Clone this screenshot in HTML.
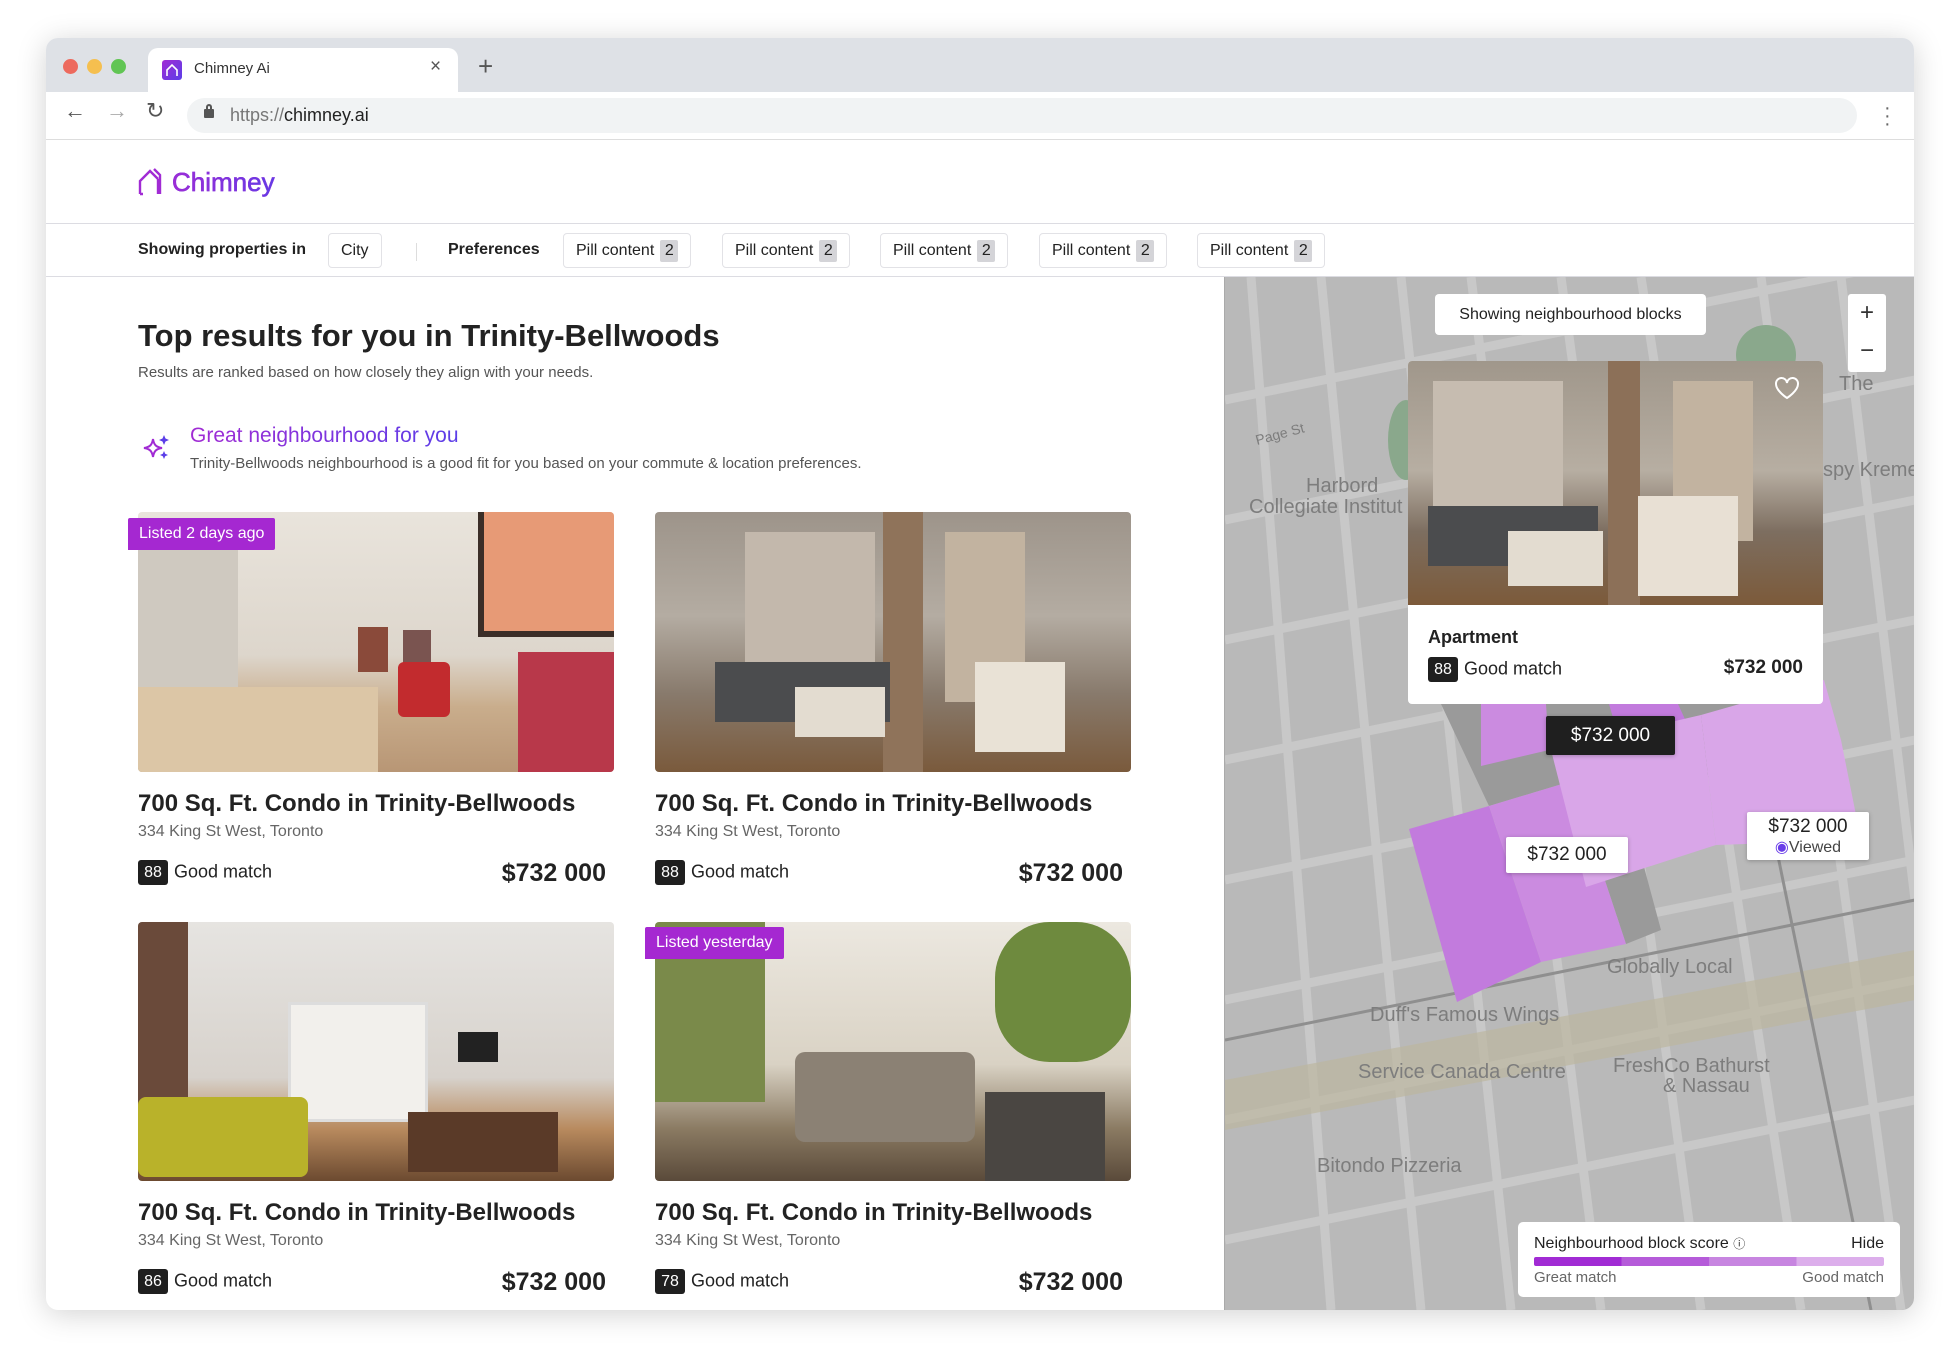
<!DOCTYPE html>
<html><head><meta charset="utf-8"><style>
*{box-sizing:border-box;margin:0;padding:0}
body{width:1960px;height:1364px;background:#fff;font-family:"Liberation Sans",sans-serif;position:relative;overflow:hidden;color:#1f1f1f}
.abs{position:absolute}
.win{position:absolute;left:46px;top:38px;width:1868px;height:1272px;border-radius:12px;overflow:hidden;box-shadow:0 4px 30px rgba(0,0,0,.18);background:#fff}
.pill{position:absolute;top:233px;height:35px;border:1px solid #e2e2e6;border-radius:4px;font-size:16px;line-height:33px;padding:0 12px;color:#222;background:#fff}
.pill b{display:inline-block;background:#d4d4d8;font-weight:normal;width:18px;height:22px;line-height:22px;text-align:center;margin-left:6px;border-radius:2px}
.img{position:absolute;border-radius:4px;overflow:hidden}
.title{position:absolute;font-size:24px;font-weight:bold;color:#222}
.addr{position:absolute;font-size:16px;color:#666}
.badge{position:absolute;font-size:18px;color:#222}
.badge span{display:inline-block;background:#1f1f1f;color:#fff;font-size:16px;width:30px;height:25px;line-height:25px;text-align:center;border-radius:3px;margin-right:6px;vertical-align:middle}
.price{position:absolute;font-size:25px;font-weight:bold;color:#222;text-align:right}
.tag{position:absolute;background:#a528d1;color:#fff;font-size:16px;height:32px;line-height:32px;padding:0 11px;border-radius:2px 2px 2px 0}
.mk{position:absolute;background:#fff;font-size:19px;text-align:center;border-radius:2px;box-shadow:0 1px 4px rgba(0,0,0,.25);color:#222}
</style></head><body>
<div class="win">
 <div class="abs" style="left:0;top:0;width:1868px;height:54px;background:#dee1e6"></div>
 <div class="abs" style="left:17px;top:21px;width:15px;height:15px;border-radius:50%;background:#ed6a5e"></div>
 <div class="abs" style="left:41px;top:21px;width:15px;height:15px;border-radius:50%;background:#f5bf4f"></div>
 <div class="abs" style="left:65px;top:21px;width:15px;height:15px;border-radius:50%;background:#61c554"></div>
 <div class="abs" style="left:102px;top:10px;width:310px;height:44px;background:#fff;border-radius:10px 10px 0 0"></div>
 <div class="abs" style="left:116px;top:22px;width:20px;height:20px;border-radius:3px;background:linear-gradient(135deg,#a12bd4,#5b3ee8)"></div>
 <svg class="abs" style="left:118px;top:24px" width="16" height="16" viewBox="0 0 16 16"><path d="M3 14V8l5-5 5 5v6" fill="none" stroke="#fff" stroke-width="1.6"/></svg>
 <div class="abs" style="left:148px;top:22px;font-size:15px;color:#333">Chimney Ai</div>
 <div class="abs" style="left:384px;top:18px;font-size:19px;color:#555">×</div>
 <div class="abs" style="left:432px;top:13px;font-size:26px;color:#555">+</div>
 <div class="abs" style="left:0;top:54px;width:1868px;height:48px;background:#fff;border-bottom:1px solid #ddd"></div>
 <div class="abs" style="left:18px;top:60px;font-size:22px;color:#555">←</div>
 <div class="abs" style="left:60px;top:60px;font-size:22px;color:#aaa">→</div>
 <div class="abs" style="left:100px;top:60px;font-size:22px;color:#555">↻</div>
 <div class="abs" style="left:141px;top:60px;width:1670px;height:35px;border-radius:18px;background:#f1f3f4"></div>
 <div class="abs" style="left:158px;top:71px;width:10px;height:9px;background:#555;border-radius:1px"></div>
 <div class="abs" style="left:160px;top:66px;width:6px;height:7px;border:2px solid #555;border-bottom:none;border-radius:3px 3px 0 0"></div>
 <div class="abs" style="left:184px;top:67px;font-size:18px;color:#777">https://<span style="color:#222">chimney.ai</span></div>
 <div class="abs" style="left:1838px;top:66px;font-size:20px;color:#666;line-height:8px">·<br>·<br>·</div>
 <svg class="abs" style="left:92px;top:128px" width="28" height="30" viewBox="0 0 28 30"><path d="M2 28V15L12 5l8 8M20 28V13M2 28h3M16 3l6 6v19" fill="none" stroke="#a12bd4" stroke-width="2.4"/></svg>
 <div class="abs" style="left:126px;top:129px;font-size:26px;background:linear-gradient(90deg,#a12bd4,#5b3ee8);-webkit-background-clip:text;color:transparent;-webkit-text-stroke:0.5px #8a33dc">Chimney</div>
 <div class="abs" style="left:0;top:185px;width:1868px;height:1px;background:#dcdce2"></div>
 <div class="abs" style="left:92px;top:203px;font-size:16px;font-weight:bold;color:#222">Showing properties in</div>
 <div class="pill" style="left:282px;top:195px">City</div>
 <div class="abs" style="left:370px;top:205px;width:1px;height:18px;background:#ddd"></div>
 <div class="abs" style="left:402px;top:203px;font-size:16px;font-weight:bold;color:#222">Preferences</div>
 <div class="pill" style="left:517px;top:195px">Pill content<b>2</b></div>
 <div class="pill" style="left:676px;top:195px">Pill content<b>2</b></div>
 <div class="pill" style="left:834px;top:195px">Pill content<b>2</b></div>
 <div class="pill" style="left:993px;top:195px">Pill content<b>2</b></div>
 <div class="pill" style="left:1151px;top:195px">Pill content<b>2</b></div>
 <div class="abs" style="left:0;top:238px;width:1868px;height:1px;background:#dcdce2"></div>
</div>

<div class="abs" style="left:138px;top:318px;font-size:31px;font-weight:bold;color:#222">Top results for you in Trinity-Bellwoods</div>
<div class="abs" style="left:138px;top:364px;font-size:15px;color:#555">Results are ranked based on how closely they align with your needs.</div>
<svg class="abs" style="left:142px;top:433px" width="30" height="30" viewBox="0 0 30 30"><path d="M11 6C12 12 14 14 20 15 14 16 12 18 11 24 10 18 8 16 2 15 8 14 10 12 11 6Z" fill="none" stroke="#a12bd4" stroke-width="2"/><path d="M22 2l1.5 3.5L27 7l-3.5 1.5L22 12l-1.5-3.5L17 7l3.5-1.5Z" fill="#5b3ee8"/><path d="M22 18l1.2 2.8L26 22l-2.8 1.2L22 26l-1.2-2.8L18 22l2.8-1.2Z" fill="#5b3ee8"/></svg>
<div class="abs" style="left:190px;top:424px;font-size:21px;background:linear-gradient(90deg,#a12bd4,#5b3ee8);-webkit-background-clip:text;color:transparent">Great neighbourhood for you</div>
<div class="abs" style="left:190px;top:455px;font-size:15px;color:#555">Trinity-Bellwoods neighbourhood is a good fit for you based on your commute &amp; location preferences.</div>

<div class="img" style="left:138px;top:512px;width:476px;height:260px;background:linear-gradient(180deg,#e9e4dc 0%,#ddd6cc 55%,#c9ad8c 75%,#b89675 100%)">
 <div class="abs" style="left:0;top:30px;width:100px;height:200px;background:#cfc9c0"></div>
 <div class="abs" style="left:340px;top:0;width:140px;height:125px;background:#e79a76;border-left:6px solid #3b2e28;border-bottom:6px solid #3b2e28"></div>
 <div class="abs" style="left:220px;top:115px;width:30px;height:45px;background:#8a4a3a"></div>
 <div class="abs" style="left:265px;top:118px;width:28px;height:45px;background:#7a5450"></div>
 <div class="abs" style="left:260px;top:150px;width:52px;height:55px;background:#c22b2e;border-radius:6px"></div>
 <div class="abs" style="left:380px;top:140px;width:100px;height:120px;background:#b8384a"></div>
 <div class="abs" style="left:0;top:175px;width:240px;height:85px;background:#dcc6a6"></div>
</div>
<div class="img" style="left:655px;top:512px;width:476px;height:260px;background:linear-gradient(180deg,#9d948a 0%,#b4aca2 40%,#887a6c 70%,#7a5a3c 100%)">
 <div class="abs" style="left:90px;top:20px;width:130px;height:150px;background:#c3b8ac"></div>
 <div class="abs" style="left:290px;top:20px;width:80px;height:170px;background:#c2b3a0"></div>
 <div class="abs" style="left:228px;top:0;width:40px;height:260px;background:#8f735a"></div>
 <div class="abs" style="left:60px;top:150px;width:175px;height:60px;background:#4b4c4e"></div>
 <div class="abs" style="left:140px;top:175px;width:90px;height:50px;background:#e3dcd0"></div>
 <div class="abs" style="left:320px;top:150px;width:90px;height:90px;background:#e9e2d6"></div>
</div>
<div class="img" style="left:138px;top:922px;width:476px;height:259px;background:linear-gradient(180deg,#e6e4e1 0%,#d7d2cc 60%,#b88a5e 80%,#6c4a30 100%)">
 <div class="abs" style="left:0;top:0;width:50px;height:200px;background:#6a4a3a"></div>
 <div class="abs" style="left:150px;top:80px;width:140px;height:120px;background:#f2f0ec;border:3px solid #ddd"></div>
 <div class="abs" style="left:0;top:175px;width:170px;height:80px;background:#b9b22a;border-radius:8px"></div>
 <div class="abs" style="left:320px;top:110px;width:40px;height:30px;background:#222"></div>
 <div class="abs" style="left:270px;top:190px;width:150px;height:60px;background:#5a3a28"></div>
</div>
<div class="img" style="left:655px;top:922px;width:476px;height:259px;background:linear-gradient(180deg,#ece8e0 0%,#d9d2c4 55%,#8a7a62 80%,#5a4a3a 100%)">
 <div class="abs" style="left:0;top:0;width:110px;height:180px;background:#7a8a4a"></div>
 <div class="abs" style="left:140px;top:130px;width:180px;height:90px;background:#8b8174;border-radius:10px"></div>
 <div class="abs" style="left:340px;top:0;width:136px;height:140px;background:#6e8a3e;border-radius:40%"></div>
 <div class="abs" style="left:330px;top:170px;width:120px;height:89px;background:#4a4642"></div>
</div>
<div class="tag" style="left:128px;top:518px">Listed 2 days ago</div>
<div class="tag" style="left:645px;top:927px">Listed yesterday</div>

<div class="title" style="left:138px;top:790px">700 Sq. Ft. Condo in Trinity-Bellwoods</div>
<div class="addr" style="left:138px;top:823px">334 King St West, Toronto</div>
<div class="badge" style="left:138px;top:860px"><span>88</span>Good match</div>
<div class="price" style="left:420px;top:859px;width:186px">$732 000</div>

<div class="title" style="left:655px;top:790px">700 Sq. Ft. Condo in Trinity-Bellwoods</div>
<div class="addr" style="left:655px;top:823px">334 King St West, Toronto</div>
<div class="badge" style="left:655px;top:860px"><span>88</span>Good match</div>
<div class="price" style="left:937px;top:859px;width:186px">$732 000</div>

<div class="title" style="left:138px;top:1199px">700 Sq. Ft. Condo in Trinity-Bellwoods</div>
<div class="addr" style="left:138px;top:1232px">334 King St West, Toronto</div>
<div class="badge" style="left:138px;top:1269px"><span>86</span>Good match</div>
<div class="price" style="left:420px;top:1268px;width:186px">$732 000</div>

<div class="title" style="left:655px;top:1199px">700 Sq. Ft. Condo in Trinity-Bellwoods</div>
<div class="addr" style="left:655px;top:1232px">334 King St West, Toronto</div>
<div class="badge" style="left:655px;top:1269px"><span>78</span>Good match</div>
<div class="price" style="left:937px;top:1268px;width:186px">$732 000</div>

<div class="abs" style="left:1224px;top:277px;width:690px;height:1033px;background:#b9b9b9;overflow:hidden;border-left:1px solid #aaa;border-bottom-right-radius:12px">
<svg width="690" height="1033" viewBox="1224 277 690 1033">
 <g stroke="#c8c8c8" stroke-width="9" fill="none">
  <path d="M1250 277L1330 1310M1320 277L1420 1310M1400 277L1510 1310M1470 277L1600 1310M1560 277L1700 1310M1640 277L1800 1310M1760 277L1900 1310M1840 277L1914 900"/>
  <path d="M1224 400L1914 260M1224 520L1914 380M1224 640L1914 500M1224 760L1914 620M1224 880L1914 740M1224 1000L1914 860M1224 1120L1914 980M1224 1240L1914 1100"/>
 </g>
 <g fill="#bcb79f" opacity=".7"><path d="M1224 1080L1914 950L1914 1000L1224 1130Z"/></g>
 <path d="M1224 1040L1914 900" stroke="#8f8f8f" stroke-width="3"/>
 <path d="M1745 700L1870 1310" stroke="#8f8f8f" stroke-width="3"/>
 <ellipse cx="1765" cy="355" rx="30" ry="30" fill="#8aa88c"/>
 <ellipse cx="1405" cy="440" rx="18" ry="40" fill="#8aa88c"/>
 <path d="M1440 704L1748 704L1768 760L1625 800L1660 930L1625 944L1571 781L1488 806Z" fill="#9a9a9a"/>
 <path d="M1408 829L1488 806L1540 962L1456 1002Z" fill="#c27bdd"/>
 <path d="M1488 806L1571 781L1625 944L1540 962Z" fill="#cb8be0"/>
 <path d="M1480 704L1545 704L1548 750L1480 766Z" fill="#cb8be0"/>
 <path d="M1608 704L1677 704L1688 728L1620 745Z" fill="#c27bdd"/>
 <path d="M1550 750L1700 715L1715 845L1585 887Z" fill="#d9a6e8"/>
 <path d="M1823 680L1840 740L1860 840L1715 845L1700 715Z" fill="#d9a6e8"/>
 <g font-family="Liberation Sans" fill="#7d7d7d" font-size="19">
  <text x="1305" y="492" font-size="20">Harbord</text>
  <text x="1248" y="513" font-size="20">Collegiate Institut</text>
  <text x="1822" y="476" font-size="20">spy Kreme</text>
  <text x="1606" y="973" font-size="20">Globally Local</text>
  <text x="1369" y="1021" font-size="20">Duff's Famous Wings</text>
  <text x="1357" y="1078" font-size="20">Service Canada Centre</text>
  <text x="1612" y="1072" font-size="20">FreshCo Bathurst</text>
  <text x="1662" y="1092" font-size="20">&amp; Nassau</text>
  <text x="1316" y="1172" font-size="20">Bitondo Pizzeria</text>
  <text x="1838" y="390" font-size="20">The</text>
  <text x="1256" y="445" font-size="14" transform="rotate(-15 1256 445)">Page St</text>
 </g>
</svg>
</div>
<div class="abs" style="left:1435px;top:294px;width:271px;height:41px;background:#fff;border-radius:4px;font-size:16px;line-height:41px;text-align:center;color:#222">Showing neighbourhood blocks</div>
<div class="abs" style="left:1848px;top:294px;width:38px;height:78px;background:#fff;border-radius:3px;text-align:center;font-size:24px;color:#333;line-height:38px">+<br>−</div>
<div class="abs" style="left:1408px;top:361px;width:415px;height:343px;background:#fff;border-radius:4px;overflow:hidden">
 <div class="abs" style="left:0;top:0;width:415px;height:244px;background:linear-gradient(180deg,#a0978b 0%,#b7aea2 45%,#7d6e60 70%,#7c5a3a 100%)">
  <div class="abs" style="left:25px;top:20px;width:130px;height:150px;background:#c6bcb0"></div>
  <div class="abs" style="left:200px;top:0;width:32px;height:244px;background:#8c7058"></div>
  <div class="abs" style="left:265px;top:20px;width:80px;height:160px;background:#c2b3a0"></div>
  <div class="abs" style="left:20px;top:145px;width:170px;height:60px;background:#4b4c4e"></div>
  <div class="abs" style="left:100px;top:170px;width:95px;height:55px;background:#e3dcd0"></div>
  <div class="abs" style="left:230px;top:135px;width:100px;height:100px;background:#e8e0d4"></div>
 </div>
 <svg class="abs" style="left:366px;top:15px" width="26" height="24" viewBox="0 0 26 24"><path d="M13 22S2 15 2 8a5.5 5.5 0 0 1 11-1 5.5 5.5 0 0 1 11 1c0 7-11 14-11 14z" fill="none" stroke="#fff" stroke-width="2"/></svg>
 <div class="abs" style="left:20px;top:266px;font-size:18px;font-weight:bold;color:#222">Apartment</div>
 <div class="badge" style="left:20px;top:296px"><span>88</span>Good match</div>
 <div class="price" style="left:250px;top:296px;width:145px;font-size:19px">$732 000</div>
</div>
<div class="mk" style="left:1546px;top:716px;width:129px;height:39px;line-height:39px;background:#1f1f1f;color:#fff">$732 000</div>
<div class="mk" style="left:1506px;top:837px;width:122px;height:36px;line-height:36px">$732 000</div>
<div class="mk" style="left:1747px;top:812px;width:122px;height:48px;line-height:20px;padding-top:5px">$732 000<br><span style="font-size:16px;color:#444"><span style="color:#6a3ee8">◉</span>Viewed</span></div>
<div class="abs" style="left:1518px;top:1222px;width:382px;height:75px;background:#fff;border-radius:5px">
 <div class="abs" style="left:16px;top:13px;font-size:16px;color:#222">Neighbourhood block score <span style="font-size:12px">ⓘ</span></div>
 <div class="abs" style="right:16px;top:13px;font-size:16px;color:#222">Hide</div>
 <div class="abs" style="left:16px;top:35px;width:350px;height:9px;border-radius:2px;background:linear-gradient(90deg,#a12bd4 0 25%,#b55bd9 25% 50%,#c785e0 50% 75%,#dcaeeb 75%)"></div>
 <div class="abs" style="left:16px;top:47px;font-size:15px;color:#666">Great match</div>
 <div class="abs" style="right:16px;top:47px;font-size:15px;color:#666">Good match</div>
</div>
</body></html>
